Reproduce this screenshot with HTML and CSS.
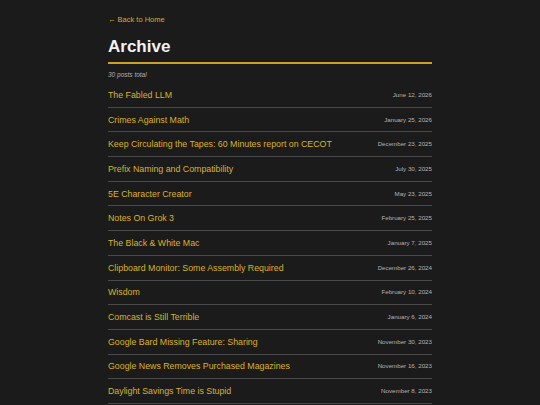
FILE: index.html
```html
<!DOCTYPE html>
<html>
<head>
<meta charset="utf-8">
<link rel="stylesheet" href="styles.css">
</head>
<body>
<main class="page">
  <a class="back" href="#">← Back to Home</a>
  <h1 class="title">Archive</h1>
  <p class="count">30 posts total</p>
  <ul class="posts">
    <li class="post"><a href="#">The Fabled LLM</a><span class="date">June 12, 2026</span></li>
    <li class="post"><a href="#">Crimes Against Math</a><span class="date">January 25, 2026</span></li>
    <li class="post"><a href="#">Keep Circulating the Tapes: 60 Minutes report on CECOT</a><span class="date">December 23, 2025</span></li>
    <li class="post"><a href="#">Prefix Naming and Compatibility</a><span class="date">July 30, 2025</span></li>
    <li class="post"><a href="#">5E Character Creator</a><span class="date">May 23, 2025</span></li>
    <li class="post"><a href="#">Notes On Grok 3</a><span class="date">February 25, 2025</span></li>
    <li class="post"><a href="#">The Black &amp; White Mac</a><span class="date">January 7, 2025</span></li>
    <li class="post"><a href="#">Clipboard Monitor: Some Assembly Required</a><span class="date">December 26, 2024</span></li>
    <li class="post"><a href="#">Wisdom</a><span class="date">February 10, 2024</span></li>
    <li class="post"><a href="#">Comcast is Still Terrible</a><span class="date">January 6, 2024</span></li>
    <li class="post"><a href="#">Google Bard Missing Feature: Sharing</a><span class="date">November 30, 2023</span></li>
    <li class="post"><a href="#">Google News Removes Purchased Magazines</a><span class="date">November 16, 2023</span></li>
    <li class="post"><a href="#">Daylight Savings Time is Stupid</a><span class="date">November 8, 2023</span></li>
  </ul>
</main>
</body>
</html>
```

FILE: styles.css
```css
html, body {
  margin: 0;
  padding: 0;
  background: #1b1b1b;
  font-family: "Liberation Sans", Arial, sans-serif;
}
.page {
  width: 324px;
  margin: 0 0 0 108px;
  padding-top: 15px;
  display: flex;
  flex-direction: column;
}
.back {
  color: #d4ad2c;
  text-decoration: none;
  font-size: 7.5px;
  line-height: 10px;
  align-self: flex-start;
}
.title {
  margin: 12px 0 0;
  font-size: 17px;
  line-height: 20px;
  font-weight: bold;
  color: #f2f2f2;
  padding-bottom: 5px;
  border-bottom: 2px solid #c9a227;
}
.count {
  margin: 7px 0 4px;
  font-size: 6.5px;
  line-height: 8px;
  font-style: italic;
  color: #b0b0b0;
}
.posts {
  list-style: none;
  margin: 0;
  padding: 0;
}
.post {
  display: flex;
  justify-content: space-between;
  align-items: center;
  padding: 6.85px 0;
  line-height: 10px;
  border-bottom: 1px solid #4a4a4a;
}
.post a {
  color: #dcb224;
  text-decoration: none;
  font-size: 8.8px;
}
.date {
  color: #b4b4b4;
  font-size: 6.2px;
}
```
